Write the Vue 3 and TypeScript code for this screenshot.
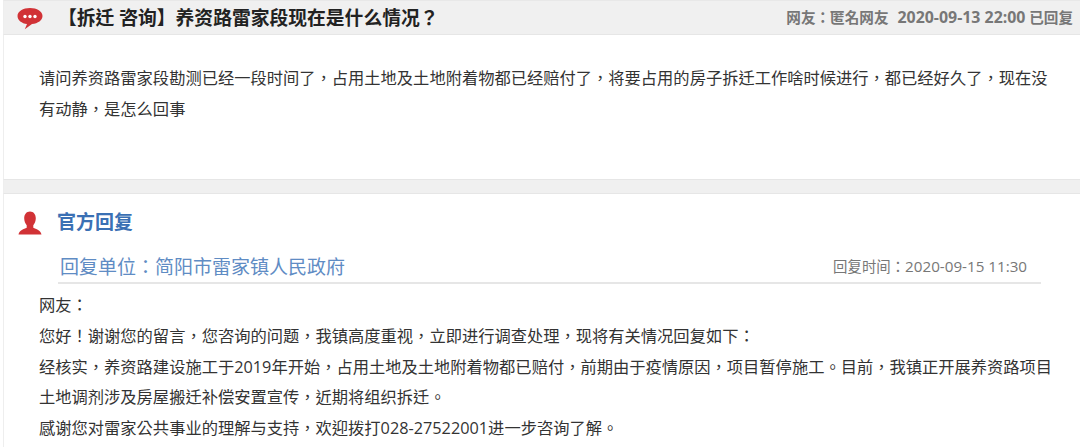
<script setup lang="ts">
const replyLines: string[] = [
  '网友：',
  '您好！谢谢您的留言，您咨询的问题，我镇高度重视，立即进行调查处理，现将有关情况回复如下：',
  '经核实，养资路建设施工于2019年开始，占用土地及土地附着物都已赔付，前期由于疫情原因，项目暂停施工。目前，我镇正开展养资路项目',
  '土地调剂涉及房屋搬迁补偿安置宣传，近期将组织拆迁。',
  '感谢您对雷家公共事业的理解与支持，欢迎拨打028-27522001进一步咨询了解。',
]
</script>

<template>
  <div class="page">
    <header class="bar">
      <div class="bar-left">
        <svg class="chat" width="26" height="24" viewBox="0 0 26 24">
          <path d="M13 2C6.100 2 .5 5.500 .5 10c0 4.200 4.300 7.500 9.500 8l-2.200 5.300L15 18c6-.5 10.500-3.800 10.500-8C25.500 5.500 19.900 2 13 2z" fill="#d13236" />
          <circle cx="8" cy="10.500" r="1.700" fill="#fff" />
          <circle cx="13" cy="10.500" r="1.700" fill="#fff" />
          <circle cx="18" cy="10.500" r="1.700" fill="#fff" />
        </svg>
        <h1 class="title">【拆迁 咨询】养资路雷家段现在是什么情况？</h1>
      </div>
      <div class="meta">网友：匿名网友<span class="meta-date">2020-09-13 22:00</span> 已回复</div>
    </header>

    <section class="question">
      请问养资路雷家段勘测已经一段时间了，占用土地及土地附着物都已经赔付了，将要占用的房子拆迁工作啥时候进行，都已经好久了，现在没有动静，是怎么回事
    </section>

    <div class="band"></div>

    <section class="official">
      <div class="official-head">
        <svg class="person" width="24" height="24" viewBox="0 0 24 24">
          <path d="M12 .5c-3.500 0-5.800 2.900-5.800 6.800 0 2.900 1.100 5.300 2.500 6.900v2.600C6 18 1.300 19.300 .5 23.500h23c-.8-4.200-5.500-5.500-8.200-6.700v-2.600c1.400-1.600 2.500-4 2.500-6.900C17.800 3.400 15.500 .5 12 .5z" fill="#d13236" />
        </svg>
        <h2 class="official-title">官方回复</h2>
      </div>
      <div class="unit-row">
        <span class="unit">回复单位：简阳市雷家镇人民政府</span>
        <span class="time">回复时间：<span class="time-date">2020-09-15 11:30</span></span>
      </div>
      <div class="answer">
        <p v-for="line in replyLines" :key="line">{{ line }}</p>
      </div>
    </section>
  </div>
</template>

<style>
html, body { margin: 0; background: #fff; overflow: hidden; }
</style>

<style scoped>
.page {
  width: 1080px;
  height: 447px;
  overflow: hidden;
  box-sizing: border-box;
  padding-left: 3px;
  background: #fff;
  font-family: "Open Sans", "Noto Sans CJK TC", sans-serif;
  color: #333;
}
.page > * { border-left: 1px solid #eee; }
.bar {
  height: 35px;
  box-sizing: border-box;
  display: flex;
  align-items: center;
  justify-content: space-between;
  padding: 0 7px 0 13px;
  background: #f0f0f0;
  border-top: 1px solid #e8e8e8;
  border-bottom: 1px solid #e6e6e6;
}
.bar-left { display: flex; align-items: center; }
.chat { display: block; margin-right: 15px; }
.title {
  margin: 0;
  font-size: 18.800px;
  line-height: 30px;
  font-weight: 700;
  color: #222;
}
.meta {
  font-size: 14.600px;
  font-weight: 700;
  color: #777;
  margin-top: -2px;
}
.meta-date {
  font-size: 15.900px;
  margin-left: 9px;
}
.question {
  height: 144px;
  box-sizing: border-box;
  padding: 28px 27px 0 35px;
  font-size: 16.270px;
  line-height: 31px;
}
.band {
  height: 15px;
  box-sizing: border-box;
  background: #f0f0f0;
  border-top: 1px solid #e6e6e6;
  border-bottom: 1px solid #e6e6e6;
}
.official { padding-top: 14px; height: 300px; }
.official-head {
  display: flex;
  align-items: center;
  height: 30px;
  padding-left: 14px;
}
.person { display: block; margin-right: 15px; }
.official-title {
  margin: -3px 0 0;
  font-size: 19px;
  line-height: 26px;
  font-weight: 700;
  color: #3a70b4;
}
.unit-row {
  display: flex;
  align-items: center;
  justify-content: space-between;
  margin: 7px 39px 0 54px;
  padding: 4px 14px 0 2px;
  height: 39px;
  border-bottom: 2px solid #e6e6e6;
  box-sizing: border-box;
}
.unit { font-size: 19px; color: #5f8cc4; }
.time { font-size: 14.400px; color: #777; }
.time-date { font-size: 15.200px; }
.answer { padding: 6px 0 0 35px; }
.answer p {
  margin: 0;
  font-size: 16.270px;
  line-height: 30.800px;
  white-space: nowrap;
}
</style>
